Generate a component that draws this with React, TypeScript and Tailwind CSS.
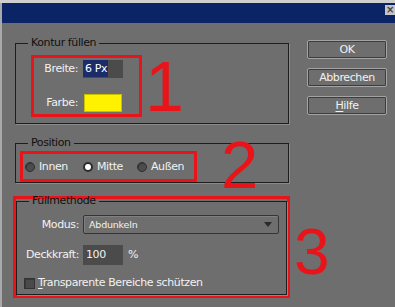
import React from "react";

const red = "border-[#e8141a]";

function Radio({ label, checked = false, w }: { label: string; checked?: boolean; w: string }) {
  return (
    <div className={`flex items-center ${w}`}>
      {checked ? (
        <span className="w-[10px] h-[10px] rounded-full bg-white border-2 border-[#2c2c2c]" />
      ) : (
        <span className="w-[10px] h-[10px] rounded-full bg-[#4c4c4c] border border-[#2f2f2f] shadow-[inset_1px_1px_0_#3a3a3a]" />
      )}
      <span className="ml-[4px] text-[#f2f2f2]">{label}</span>
    </div>
  );
}

function DialogButton({ children }: { children: React.ReactNode }) {
  return (
    <div className="w-[80px] h-[19px] flex items-center justify-center rounded-[2px] border border-[#a4a4a4] shadow-[inset_0_0_0_1px_#3c3c3c] text-[#f2f2f2]">
      {children}
    </div>
  );
}

export default function App() {
  return (
    <div className="w-[395px] h-[307px] overflow-hidden relative bg-[#6e6e6e] text-[11px] leading-[14px] tracking-[-0.4px] font-['DejaVu_Sans',sans-serif]">
      {/* window frame top */}
      <div className="h-[3px] bg-[#cfcfcf]" />
      <div className="border-l-2 border-[#a9a9a9] h-[304px]">
        <div className="h-[20px] bg-[#0b2466] flex justify-end">
          <div className="mt-[2px] w-[10px] h-[10px] bg-[#c4c4c4] text-[#404040] text-[10px] leading-[10px] font-bold flex items-center justify-center">
            ×
          </div>
        </div>

        <div className="flex pl-[13px]">
          {/* left column */}
          <div className="w-[274px]">
            <fieldset className="mt-[13px] h-[88px] border border-[#1e1e1e] shadow-[1px_1px_0_#8a8a8a]">
              <legend className="ml-[12px] px-[3px] text-[#111]">Kontur füllen</legend>
              <div className={`ml-[15px] mt-[5px] w-[111px] h-[62px] border-[3px] ${red}`}>
                <div className="flex items-center mt-[2px]">
                  <span className="w-[44px] text-right text-[#f2f2f2]">Breite:</span>
                  <div className="ml-[5px] w-[40px] h-[18px] bg-[#4b4b4b] flex">
                    <span className="w-[25px] h-[17px] bg-[#1c2c6a] text-white pl-[2px] leading-[17px] whitespace-nowrap">6 Px</span>
                  </div>
                </div>
                <div className="flex items-center mt-[16px]">
                  <span className="w-[44px] text-right text-[#f2f2f2]">Farbe:</span>
                  <div className="ml-[6px] w-[38px] h-[18px] bg-[#fff200] border border-[#c9c000]" />
                </div>
              </div>
            </fieldset>

            <fieldset className="mt-[12px] h-[47px] border border-[#1e1e1e] shadow-[1px_1px_0_#8a8a8a]">
              <legend className="ml-[12px] px-[3px] text-[#111]">Position</legend>
              <div className={`ml-[4px] mt-[1px] w-[177px] h-[31px] border-[3px] ${red} flex items-center pl-[2px]`}>
                <Radio label="Innen" w="w-[58px]" />
                <Radio label="Mitte" checked w="w-[54px]" />
                <Radio label="Außen" w="w-[54px]" />
              </div>
            </fieldset>

            <div className={`-ml-[2px] mt-[13px] w-[277px] h-[102px] border-[3px] ${red}`}>
              <fieldset className="-mt-[5px] h-[101px] border border-[#1e1e1e] shadow-[1px_1px_0_#8a8a8a]">
                <legend className="ml-[12px] px-[3px] text-[#111]">Füllmethode</legend>
                <div className="flex items-center mt-[7px]">
                  <span className="w-[62px] text-right text-[#f2f2f2]">Modus:</span>
                  <div className="ml-[4px] w-[196px] h-[19px] rounded-[2px] border border-[#353535] shadow-[inset_1px_1px_0_#808080] flex items-center justify-between pl-[5px] pr-[6px]">
                    <span className="text-[9.5px] tracking-[-0.2px] text-[#f2f2f2]">Abdunkeln</span>
                    <span className="w-0 h-0 border-l-[4px] border-r-[4px] border-t-[5px] border-l-transparent border-r-transparent border-t-[#2a2a2a]" />
                  </div>
                </div>
                <div className="flex items-center mt-[11px]">
                  <span className="w-[62px] text-right text-[#f2f2f2]">Deckkraft:</span>
                  <div className="ml-[4px] w-[40px] h-[20px] bg-[#4b4b4b] pl-[3px] leading-[20px] text-[#f2f2f2]">100</div>
                  <span className="ml-[5px] text-[#f2f2f2]">%</span>
                </div>
                <div className="flex items-center mt-[11px]">
                  <span className="ml-[7px] w-[11px] h-[11px] bg-[#4a4a4a] border border-[#333] shadow-[inset_1px_1px_0_#3a3a3a]" />
                  <span className="ml-[3px] text-[#f2f2f2]">
                    <span className="underline underline-offset-2">T</span>ransparente Bereiche schützen
                  </span>
                </div>
              </fieldset>
            </div>
          </div>

          {/* buttons */}
          <div className="ml-[18px] mt-[17px] flex flex-col gap-[9px]">
            <DialogButton>OK</DialogButton>
            <DialogButton>Abbrechen</DialogButton>
            <DialogButton>
              <span>
                <span className="underline underline-offset-2">H</span>ilfe
              </span>
            </DialogButton>
          </div>
        </div>
      </div>

      {/* annotation numbers */}
      <span className="absolute left-[145px] top-[52px] text-[70px] leading-none tracking-normal text-[#e8141a] font-['Liberation_Sans',sans-serif]">1</span>
      <span className="absolute left-[221px] top-[131px] text-[67px] leading-none tracking-normal text-[#e8141a] font-['Liberation_Sans',sans-serif]">2</span>
      <span className="absolute left-[294px] top-[220px] text-[64px] leading-none tracking-normal text-[#e8141a] font-['Liberation_Sans',sans-serif]">3</span>
    </div>
  );
}
